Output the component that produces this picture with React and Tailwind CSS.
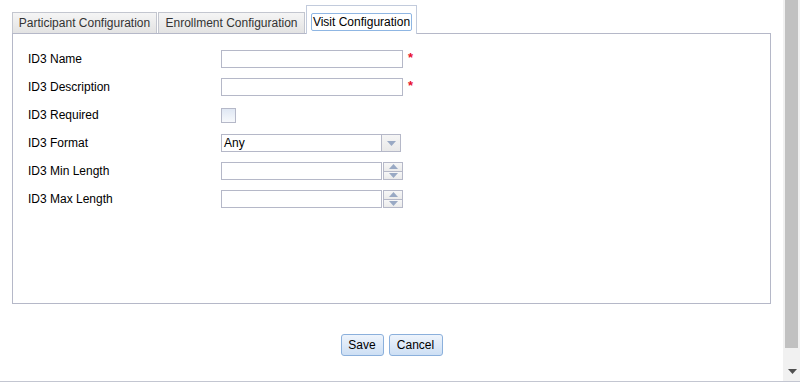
import React from "react"

const font = "font-['Liberation_Sans',Arial,sans-serif]"

const Required = () => (
  <span className="self-start mt-[1px] ml-[5px] text-[13px] font-bold leading-none text-[#e8102c]">
    *
  </span>
)

const TextField = ({ required }) => (
  <div className="flex items-center">
    <input
      type="text"
      className="w-[182px] h-[18px] border border-[#b5b8c8] bg-white px-[3px] text-[12px] outline-none"
    />
    {required && <Required />}
  </div>
)

const Arrow = ({ up, color = "#99a9c4" }) => (
  <svg width="9" height="5" viewBox="0 0 9 5">
    {up ? (
      <path d="M0 5 L4.5 0 L9 5 Z" fill={color} />
    ) : (
      <path d="M0 0 L9 0 L4.5 5 Z" fill={color} />
    )}
  </svg>
)

const Combo = ({ value }) => (
  <div className="flex w-[180px] h-[18px] border border-[#b5b8c8] bg-white">
    <div className="flex-1 flex items-center pl-[2px] text-[12px] text-black">
      {value}
    </div>
    <div className="w-[19px] border-l border-[#b5b8c8] bg-linear-to-b from-[#f5f5f5] to-[#e9e9e9] flex items-center justify-center">
      <Arrow />
    </div>
  </div>
)

const Spinner = () => (
  <div className="flex items-center">
    <input
      type="text"
      className="w-[161px] h-[18px] border border-[#b5b8c8] bg-white outline-none"
    />
    <div className="ml-[1px] w-[20px] h-[18px] border border-[#b5b8c8] flex flex-col">
      <div className="flex-1 flex items-center justify-center bg-linear-to-b from-[#f7f7f7] to-[#ebebeb]">
        <Arrow up />
      </div>
      <div className="flex-1 flex items-center justify-center border-t border-[#b5b8c8] bg-linear-to-b from-[#f7f7f7] to-[#ebebeb]">
        <Arrow />
      </div>
    </div>
  </div>
)

const Checkbox = () => (
  <div className="w-[15px] h-[15px] border border-[#b5b8c8] bg-linear-to-b from-[#dfe7f3] to-[#f7f9fc]" />
)

const Row = ({ label, children }) => (
  <div className="flex items-center h-[18px]">
    <div className="w-[193px] -mt-[1px] text-[12px] text-black">{label}</div>
    {children}
  </div>
)

const Tab = ({ label, width }) => (
  <div
    className={`h-[21px] ${width} border border-b-0 border-[#c3c6cf] bg-linear-to-b from-[#f5f5f5] to-[#e3e3e3] flex items-center justify-center text-[12px] text-[#333]`}
  >
    {label}
  </div>
)

const Button = ({ label, width }) => (
  <button
    type="button"
    className={`${width} h-[22px] rounded-[3px] border border-[#8bb0dc] bg-linear-to-b from-[#eef4fc] to-[#cddff4] text-[12px] text-black`}
  >
    {label}
  </button>
)

export default function App() {
  return (
    <div className={`w-[800px] h-[383px] bg-white flex flex-col ${font}`}>
      <div className="flex h-[381px]">
        <div className="w-[783px] flex flex-col pt-[5px] pl-[12px]">
          <div className="flex items-end h-[28px] gap-[1px]">
            <Tab label="Participant Configuration" width="w-[145px]" />
            <Tab label="Enrollment Configuration" width="w-[147px]" />
            <div className="relative z-10 -mb-[1px] h-[29px] w-[111px] border border-b-0 border-[#c2cbdc] bg-white flex justify-center pt-[7px]">
              <div className="h-[18px] px-[1px] border border-[#8fb6e3] rounded-[2px] flex items-center text-[12px] text-black">
                Visit Configuration
              </div>
            </div>
          </div>
          <div className="w-[759px] h-[271px] border border-[#b5b8c8] pt-[16px] pl-[15px] flex flex-col gap-[10px]">
            <Row label="ID3 Name">
              <TextField required />
            </Row>
            <Row label="ID3 Description">
              <TextField required />
            </Row>
            <Row label="ID3 Required">
              <Checkbox />
            </Row>
            <Row label="ID3 Format">
              <Combo value="Any" />
            </Row>
            <Row label="ID3 Min Length">
              <Spinner />
            </Row>
            <Row label="ID3 Max Length">
              <Spinner />
            </Row>
          </div>
          <div className="mt-[30px] -ml-[12px] flex justify-center gap-[5px]">
            <Button label="Save" width="w-[43px]" />
            <Button label="Cancel" width="w-[54px]" />
          </div>
        </div>
        <div className="w-[17px] bg-[#f1f1f1] flex flex-col">
          <div className="ml-[2px] w-[13px] h-[348px] bg-[#c1c1c1]" />
          <div className="flex-1 flex items-end justify-center pb-[7px] pl-[1px]">
            <Arrow color="#505050" />
          </div>
        </div>
      </div>
      <div className="h-[1px] bg-[#c3c6d1]" />
      <div className="h-[1px] bg-white" />
    </div>
  )
}
